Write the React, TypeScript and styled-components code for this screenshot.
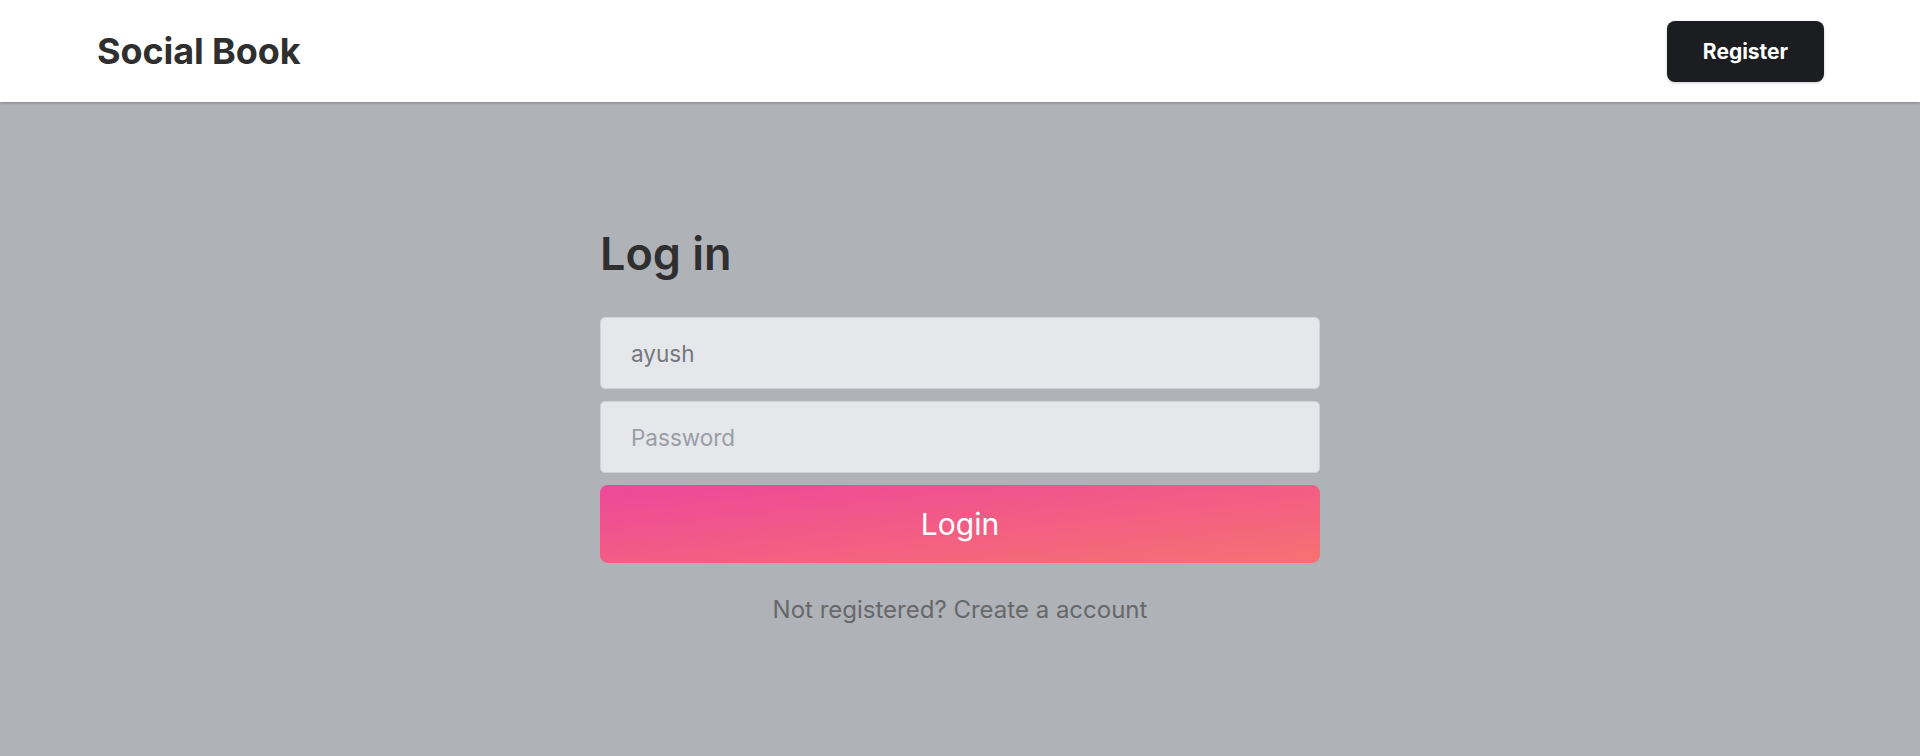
import React from "react";
import styled, { createGlobalStyle } from "styled-components";

const Global = createGlobalStyle`
  html, body { margin: 0; padding: 0; }
  body {
    font-family: Inter, "Noto Sans", sans-serif;
    background: #afb2b6;
    min-height: 756px;
  }
  * { box-sizing: border-box; }
`;

const Page = styled.div`
  min-height: 756px;
  background: #afb2b6;
`;

const Header = styled.header`
  height: 102px;
  background: #ffffff;
  display: flex;
  align-items: center;
  justify-content: space-between;
  padding: 0 96px 0 97px;
  box-shadow: 0 1px 3px rgba(0, 0, 0, 0.18), 0 1px 2px rgba(0, 0, 0, 0.1);
  position: relative;
`;

const Brand = styled.div`
  font-size: 36px;
  font-weight: 700;
  color: #2f2f2f;
  letter-spacing: -0.1px;
`;

const RegisterButton = styled.button`
  width: 157px;
  height: 61px;
  border: none;
  border-radius: 8px;
  background: #1c1d21;
  color: #ffffff;
  font-family: Inter, sans-serif;
  font-size: 21px;
  font-weight: 700;
  box-shadow: 0 1px 3px rgba(0, 0, 0, 0.2);
  cursor: pointer;
`;

const Main = styled.main`
  display: flex;
  justify-content: center;
  padding-top: 125px;
`;

const Form = styled.form`
  width: 720px;
  display: flex;
  flex-direction: column;
`;

const Title = styled.h1`
  margin: 0 0 36px 0;
  font-size: 45px;
  line-height: 54px;
  font-weight: 600;
  color: #2f2f2f;
`;

const Fields = styled.div`
  display: flex;
  flex-direction: column;
  gap: 12px;
`;

const Input = styled.input`
  height: 72px;
  width: 100%;
  padding: 0 30px;
  border: 1px solid #d1d3d7;
  border-radius: 5px;
  background: #e5e7eb;
  font-family: Inter, sans-serif;
  font-size: 22.5px;
  color: #75787d;
  outline: none;
  &::placeholder {
    color: #9a9ea6;
  }
`;

const LoginButton = styled.button`
  height: 78px;
  width: 100%;
  border: none;
  border-radius: 8px;
  background: linear-gradient(to bottom right, #ec4899, #f87171);
  color: #ffffff;
  font-family: Inter, sans-serif;
  font-size: 30px;
  font-weight: 400;
  cursor: pointer;
`;

const Footnote = styled.p`
  margin: 31px 0 0;
  text-align: center;
  font-size: 24px;
  line-height: 32px;
  color: #67686b;
`;

export default function App() {
  return (
    <>
      <Global />
      <Page>
        <Header>
          <Brand>Social Book</Brand>
          <RegisterButton>Register</RegisterButton>
        </Header>
        <Main>
          <Form onSubmit={(e) => e.preventDefault()}>
            <Title>Log in</Title>
            <Fields>
              <Input type="text" defaultValue="ayush" />
              <Input type="password" placeholder="Password" />
              <LoginButton type="submit">Login</LoginButton>
            </Fields>
            <Footnote>Not registered? Create a account</Footnote>
          </Form>
        </Main>
      </Page>
    </>
  );
}
